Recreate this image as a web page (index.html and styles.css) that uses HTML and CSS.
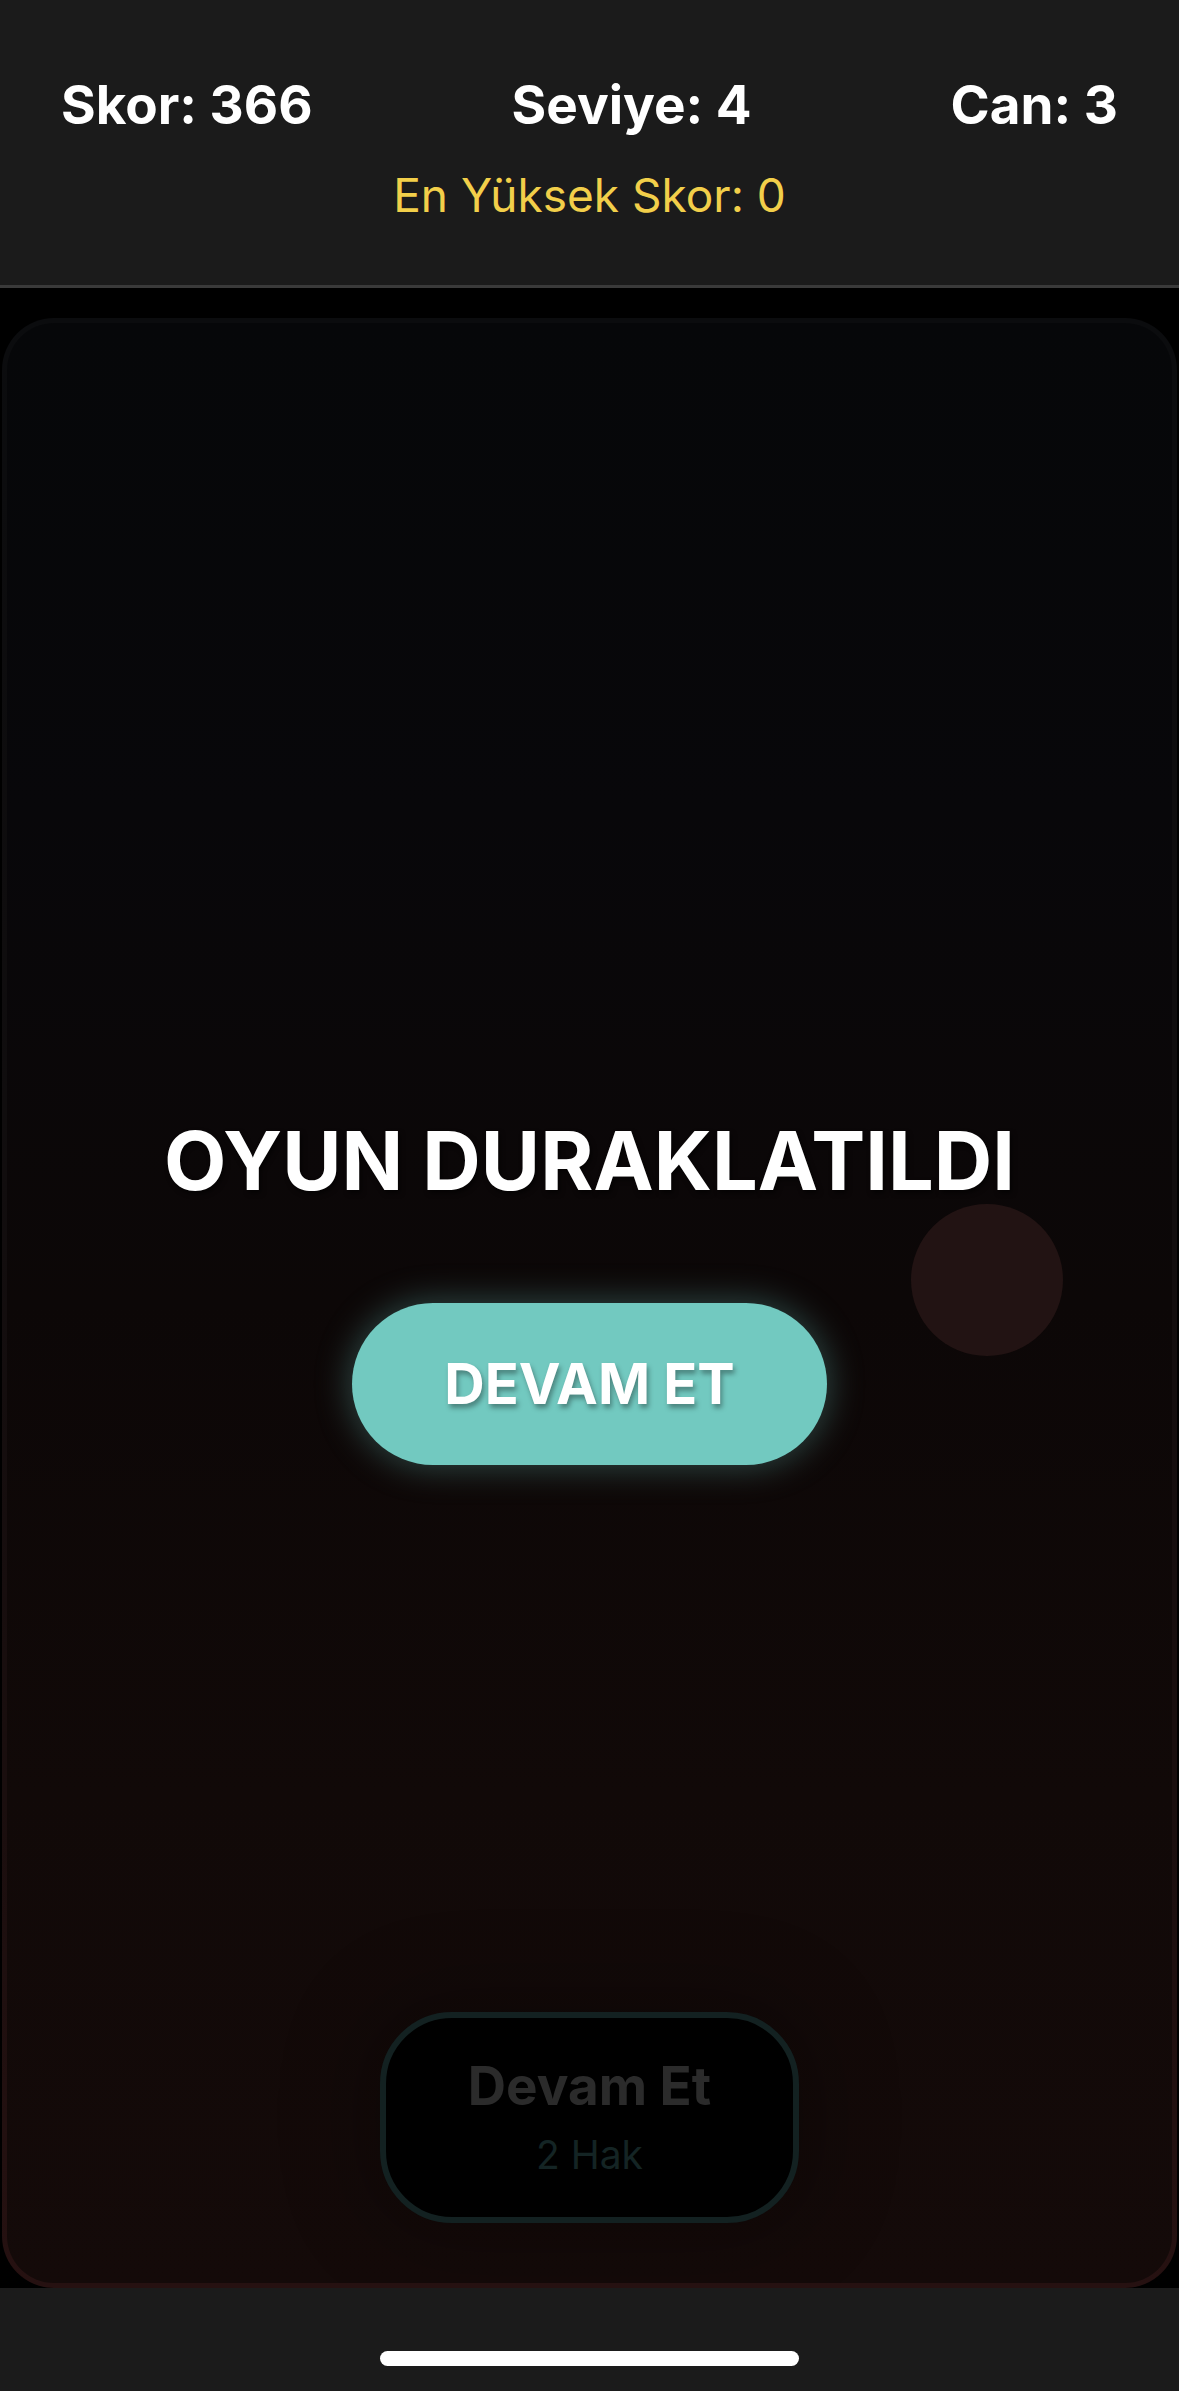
FILE: index.html
```html
<!DOCTYPE html>
<html lang="tr">
<head>
<meta charset="utf-8">
<title>Oyun Duraklatıldı</title>
<link rel="stylesheet" href="styles.css">
</head>
<body>
<div class="screen">
  <header class="topbar">
    <div class="stats">
      <span class="stat">Skor: 366</span>
      <span class="stat">Seviye: 4</span>
      <span class="stat">Can: 3</span>
    </div>
    <div class="best">En Yüksek Skor: 0</div>
  </header>
  <main class="stage">
    <section class="board">
      <div class="ball"></div>
      <button class="revive">
        <span class="revive-title">Devam Et</span>
        <span class="revive-sub">2 Hak</span>
      </button>
      <div class="pause">
        <h1 class="pause-title">OYUN DURAKLATILDI</h1>
        <button class="resume">DEVAM ET</button>
      </div>
    </section>
  </main>
  <footer class="homebar">
    <div class="indicator"></div>
  </footer>
</div>
</body>
</html>
```

FILE: styles.css
```css
* { box-sizing: border-box; }
html, body {
  margin: 0;
  padding: 0;
  background: #000;
}
body {
  font-family: "Inter", "Noto Sans", "Liberation Sans", sans-serif;
  color: #fff;
}
.screen {
  width: 1179px;
  height: 2391px;
  display: flex;
  flex-direction: column;
  background: #000;
  overflow: hidden;
}
.topbar {
  height: 288px;
  flex: none;
  background: #1b1b1b;
  border-bottom: 3px solid #3a3a3a;
  padding-top: 72px;
}
.stats {
  display: flex;
  justify-content: space-between;
  padding: 0 61px;
}
.stat {
  font-size: 53px;
  line-height: 66px;
  font-weight: 700;
  color: #fff;
}
.best {
  margin-top: 28px;
  text-align: center;
  font-size: 46px;
  line-height: 58px;
  color: #f2cf4a;
}
.stage {
  flex: 1;
  display: flex;
  flex-direction: column;
  padding: 30px 2px 0;
}
.board {
  position: relative;
  flex: 1;
  display: flex;
  flex-direction: column;
  align-items: center;
  border: 5px solid transparent;
  border-radius: 52px;
  background:
    linear-gradient(180deg, #060709 0%, #08070a 25%, #0c0707 50%, #110908 75%, #140a09 100%) padding-box,
    linear-gradient(180deg, #0b0c0e 0%, #100d0e 40%, #1a0e0e 75%, #261111 100%) border-box;
  overflow: hidden;
}
.ball {
  position: absolute;
  left: 904px;
  top: 881px;
  width: 152px;
  height: 152px;
  border-radius: 50%;
  background: #221313;
}
.revive {
  margin-top: auto;
  margin-bottom: 60px;
  width: 419px;
  height: 211px;
  border: 6px solid #132121;
  border-radius: 72px;
  background: #000;
  display: flex;
  flex-direction: column;
  align-items: center;
  padding: 36px 0 0;
  font-family: inherit;
  box-shadow: 0 0 80px 20px rgba(0, 0, 0, 0.25);
}
.revive-title {
  font-size: 53px;
  line-height: 64px;
  font-weight: 700;
  color: #2b2b2b;
}
.revive-sub {
  margin-top: 13px;
  font-size: 39px;
  line-height: 48px;
  color: #142424;
}
.pause {
  position: absolute;
  inset: 0;
  display: flex;
  flex-direction: column;
  align-items: center;
  justify-content: center;
  padding-bottom: 30px;
}
.pause-title {
  margin: 0;
  font-size: 81px;
  line-height: 100px;
  font-weight: 700;
  color: #fff;
  text-shadow: 2px 3px 5px rgba(0, 0, 0, 0.6);
}
.resume {
  margin-top: 92px;
  width: 475px;
  height: 162px;
  border: none;
  border-radius: 81px;
  background: #72c9c0;
  color: #fff;
  font-family: inherit;
  font-size: 56px;
  font-weight: 700;
  text-shadow: 2px 4px 5px rgba(0, 0, 0, 0.35);
  box-shadow: 0 0 36px rgba(114, 201, 192, 0.38);
}
.homebar {
  height: 103px;
  flex: none;
  background: #1b1b1b;
  display: flex;
  justify-content: center;
  padding-top: 63px;
}
.indicator {
  width: 419px;
  height: 15px;
  border-radius: 8px;
  background: #fff;
}
```
